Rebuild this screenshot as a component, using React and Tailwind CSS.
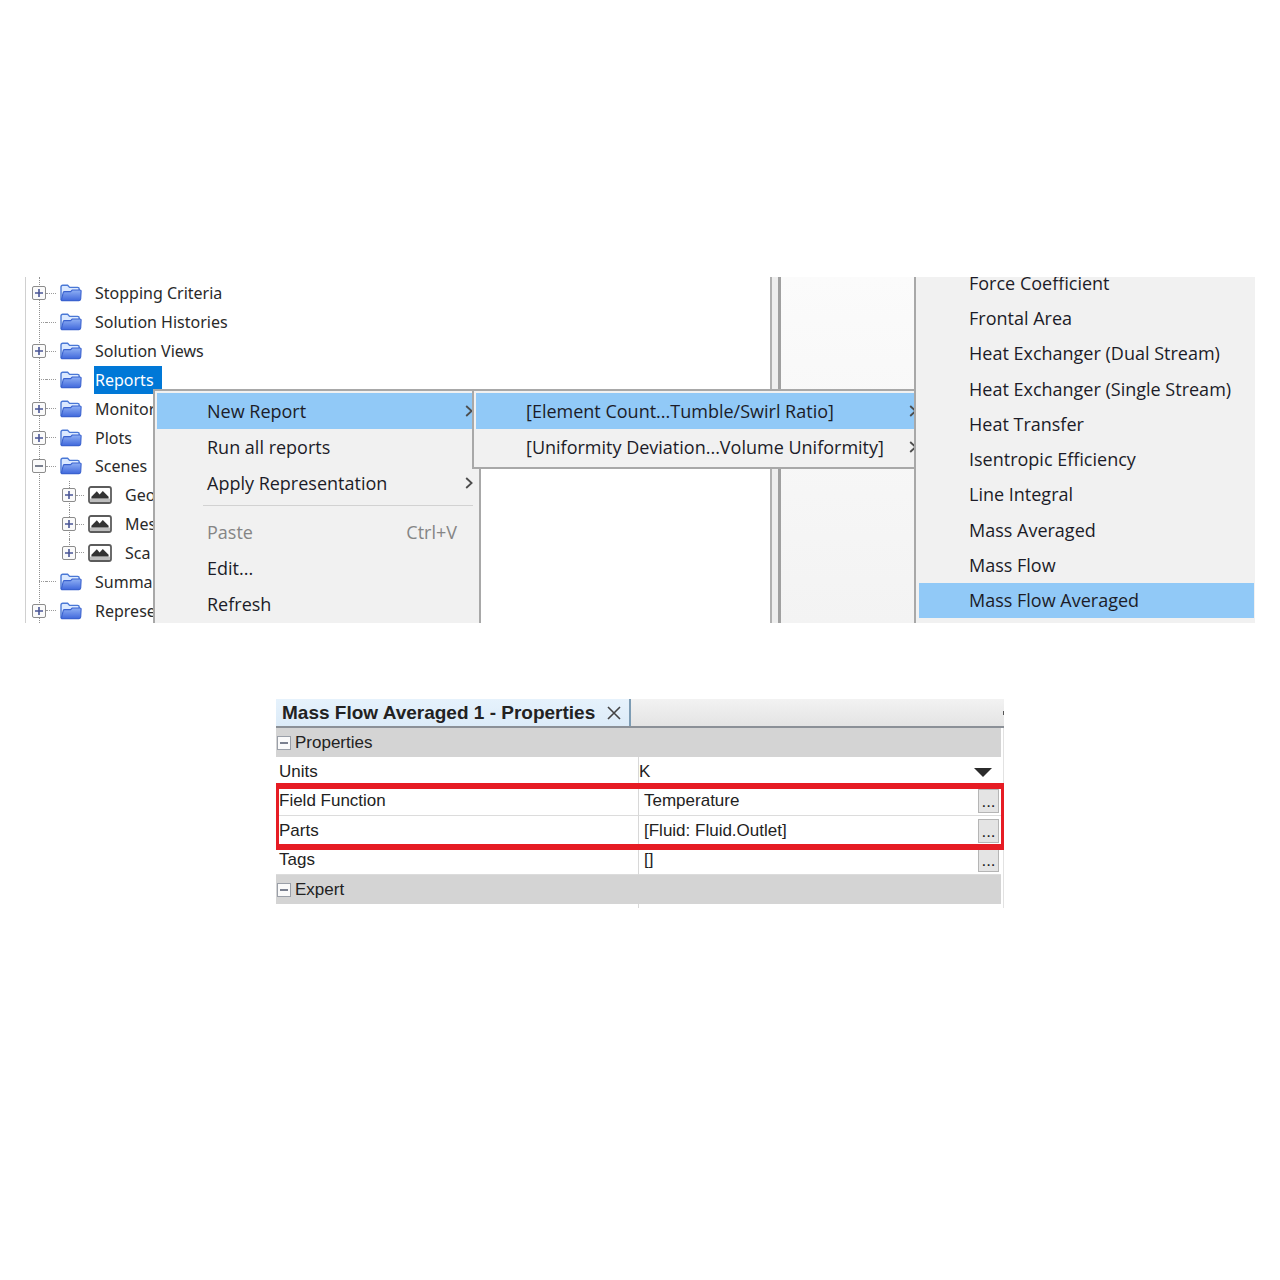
import clsx from "clsx";

const TREE = [
  { label: "Stopping Criteria", state: "closed" },
  { label: "Solution Histories" },
  { label: "Solution Views", state: "closed" },
  { label: "Reports", selected: true },
  { label: "Monitor", state: "closed" },
  { label: "Plots", state: "closed" },
  { label: "Scenes", state: "open" },
  { label: "Geo", state: "closed", child: true },
  { label: "Mes", state: "closed", child: true },
  { label: "Sca", state: "closed", child: true, last: true },
  { label: "Summar" },
  { label: "Represe", state: "closed" },
];

const REPORT_TYPES = [
  "Force Coefficient",
  "Frontal Area",
  "Heat Exchanger (Dual Stream)",
  "Heat Exchanger (Single Stream)",
  "Heat Transfer",
  "Isentropic Efficiency",
  "Line Integral",
  "Mass Averaged",
  "Mass Flow",
  "Mass Flow Averaged",
];

function FolderIcon() {
  return (
    <svg width="22" height="18" viewBox="0 0 22 18" className="shrink-0">
      <defs>
        <linearGradient id="folder" x1="0" y1="0" x2="0" y2="1">
          <stop offset="0" stopColor="#8fb0f4" />
          <stop offset="1" stopColor="#4169dc" />
        </linearGradient>
      </defs>
      <path
        d="M1 15.5V3Q1 1.2 2.8 1.2H7.6L9.6 3.4H17.6Q19.2 3.4 19.2 5V15.5Z"
        fill="#dbe9ff"
        stroke="#4a78d6"
        strokeWidth="1.4"
      />
      <path
        d="M1.4 16 3.2 8.6Q3.5 7.6 4.6 7.6H10.6L12.2 6H20Q21.2 6 21.1 7.2L20.7 15Q20.6 16.6 19 16.6H2.2Q1.2 16.6 1.4 16Z"
        fill="url(#folder)"
        stroke="#3a62cf"
        strokeWidth="1.1"
      />
    </svg>
  );
}

function SceneIcon() {
  return (
    <svg width="24" height="18" viewBox="0 0 24 18" className="shrink-0">
      <rect x="1" y="1" width="22" height="16" rx="2" fill="#fff" stroke="#5c5c5c" strokeWidth="1.8" />
      <path d="M2 12.6H22V16H2Z" fill="#bdbdbd" />
      <path d="M3.4 12.6V10.8L8.8 5.2 11.6 8.6 14.8 5 20.6 10.8V12.6Z" fill="#333" />
    </svg>
  );
}

function ToggleBox({ open, label, square }) {
  return (
    <button
      type="button"
      aria-label={label}
      aria-expanded={open}
      className={clsx(
        "relative z-10 flex size-[14px] shrink-0 items-center justify-center border bg-[#fafafa]",
        square ? "border-[#9a9fa8]" : "rounded-xs border-[#8c8c8c]",
      )}
    >
      <svg width="10" height="10" viewBox="0 0 10 10">
        <path
          d={open ? "M1 5H9" : "M1 5H9M5 1V9"}
          stroke={open ? "#5b6275" : "#4a5696"}
          strokeWidth="1.6"
        />
      </svg>
    </button>
  );
}

function TreeRow({ label, state, selected, child, last }) {
  return (
    <li className={clsx("relative flex items-center", child ? "pl-9" : "pl-[6px]")}>
      {child && (
        <span
          className={clsx(
            "absolute top-0 left-[43px] border-l border-dotted border-[#8f8f8f]",
            last ? "h-1/2" : "h-full",
          )}
        />
      )}
      {state ? (
        <ToggleBox open={state === "open"} label={`Toggle ${label}`} />
      ) : (
        <span className="ml-[7px] w-[7px] border-t border-dotted border-[#9a9a9a]" />
      )}
      <span
        className={clsx(
          "mr-1 border-t border-dotted border-[#9a9a9a]",
          child ? "w-2" : "w-[10px]",
        )}
      />
      {child ? <SceneIcon /> : <FolderIcon />}
      <span
        className={clsx(
          "ml-3 flex h-full items-center pl-px whitespace-nowrap",
          selected && "bg-[#0078d7] pr-2 text-white",
        )}
      >
        {label}
      </span>
    </li>
  );
}

function Chevron() {
  return (
    <svg width="8" height="12" viewBox="0 0 8 12" className="shrink-0">
      <path d="M1.2 1 6.6 6 1.2 11" fill="none" stroke="#4d4d4d" strokeWidth="1.8" />
    </svg>
  );
}

function MenuItem({ label, shortcut, submenu, active, disabled }) {
  return (
    <li>
      <button
        type="button"
        disabled={disabled}
        className={clsx(
          "flex h-full w-full items-center pr-1 pl-[50px] text-left whitespace-nowrap",
          active && "bg-[#91c9f7]",
          disabled && "text-[#858585]",
        )}
      >
        <span className="flex-1">{label}</span>
        {shortcut && <span className="pr-4">{shortcut}</span>}
        {submenu && <Chevron />}
      </button>
    </li>
  );
}

function ReportMenus() {
  return (
    <div className="absolute inset-0 font-['Open_Sans','Noto_Sans',sans-serif] text-[18px] leading-6 text-[#1c1c28]">
      <div className="absolute top-28 left-32 h-60 w-[328px] border-2 border-[#a8a8a8] bg-[#f1f1f1] p-[2px]">
        <ul className="grid auto-rows-[36px]">
          <MenuItem label="New Report" submenu active />
          <MenuItem label="Run all reports" />
          <MenuItem label="Apply Representation" submenu />
        </ul>
        <hr className="mt-1 mr-1 mb-2 ml-[46px] border-[#d2d2d2]" />
        <ul className="grid auto-rows-[36px]">
          <MenuItem label="Paste" shortcut="Ctrl+V" disabled />
          <MenuItem label="Edit..." />
          <MenuItem label="Refresh" />
        </ul>
      </div>
      <div className="absolute top-28 left-[447px] w-[453px] border-2 border-[#a8a8a8] bg-[#f1f1f1] p-[2px]">
        <ul className="grid auto-rows-[36px]">
          <MenuItem label="[Element Count...Tumble/Swirl Ratio]" submenu active />
          <MenuItem label="[Uniformity Deviation...Volume Uniformity]" submenu />
        </ul>
      </div>
      <div className="absolute top-0 right-0 bottom-0 left-[889px] border-l-2 border-[#a8a8a8] bg-[#f1f1f1]">
        <ul className="absolute right-px bottom-[5px] left-[3px] grid h-[353px] auto-rows-fr">
          {REPORT_TYPES.map((type) => (
            <MenuItem key={type} label={type} active={type === "Mass Flow Averaged"} />
          ))}
        </ul>
      </div>
    </div>
  );
}

function SimulationWindow() {
  return (
    <section className="relative grid h-[346px] grid-cols-[745fr_11px_474fr] overflow-hidden">
      <ul className="relative grid h-[348px] auto-rows-fr border-l border-[#d0d0d0] pt-[2px] font-['Noto_Sans','Open_Sans',sans-serif] text-[16px] leading-6 text-[#2a2a2a]">
        <li aria-hidden="true" className="absolute inset-y-0 left-[13px] border-l border-dotted border-[#8f8f8f]" />
        {TREE.map((node) => (
          <TreeRow key={node.label} {...node} />
        ))}
      </ul>
      <div className="border-r-3 border-l-2 border-r-[#a0a0a0] border-l-[#b0b0b0] bg-[#eeeeee]" />
      <div className="bg-linear-to-b from-[#fbfbfb] to-[#f3f3f3]" />
      <ReportMenus />
    </section>
  );
}

function SectionRow({ title }) {
  return (
    <tr className="h-[29px] bg-[#d4d4d4]">
      <th colSpan="2" className="text-left font-normal">
        <span className="flex items-center gap-1 pl-px">
          <ToggleBox open square label={`Toggle ${title}`} />
          {title}
        </span>
      </th>
    </tr>
  );
}

function PropertyRow({ name, value }) {
  return (
    <tr className="h-[29px] border-b border-[#dcdcdc]">
      <th className="border-r border-[#d8d8d8] pl-[3px] text-left font-normal">{name}</th>
      <td className="pl-[5px]">
        <div className="flex items-center justify-between pr-[2px]">
          {value}
          <button
            type="button"
            aria-label={`Edit ${name}`}
            className="flex h-6 w-[21px] items-end justify-center border border-[#b5b5b5] bg-[#e4e4e4] leading-5"
          >
            ...
          </button>
        </div>
      </td>
    </tr>
  );
}

function PropertiesPanel() {
  return (
    <section className="relative mx-auto w-[728px] max-w-full font-['Liberation_Sans',Arial,sans-serif] text-[17px] leading-6 text-[#222]">
      <div className="flex h-[29px] items-stretch justify-between border-b-2 border-[#8b9097] bg-linear-to-b from-[#f2f2f2] to-[#e4e4e4]">
        <div className="flex items-center gap-3 border-r-2 border-[#7d9cb4] bg-linear-to-b from-[#e6f2fc] to-[#dcebf8] pr-2 pl-[6px]">
          <h2 className="text-[19px] font-bold">Mass Flow Averaged 1 - Properties</h2>
          <button type="button" aria-label="Close">
            <svg width="14" height="14" viewBox="0 0 14 14">
              <path d="M1 1 13 13M13 1 1 13" stroke="#444" strokeWidth="1.6" />
            </svg>
          </button>
        </div>
        <span className="h-1 w-px self-center bg-[#555]" />
      </div>
      <div className="border-r border-[#e2e2e2] pr-[2px]">
        <table className="h-44 w-full table-fixed border-collapse">
          <colgroup>
            <col className="w-1/2" />
            <col className="w-1/2" />
          </colgroup>
          <tbody>
            <SectionRow title="Properties" />
            <tr className="h-[29px]">
              <th className="border-r border-[#d8d8d8] pl-[3px] text-left font-normal">
                <label htmlFor="units">Units</label>
              </th>
              <td>
                <div className="relative">
                  <select id="units" className="block w-full appearance-none bg-transparent">
                    <option>K</option>
                  </select>
                  <svg
                    width="18"
                    height="9"
                    viewBox="0 0 18 9"
                    className="pointer-events-none absolute top-2 right-[9px]"
                  >
                    <path d="M0 0H18L9 9Z" fill="#2b2b2b" />
                  </svg>
                </div>
              </td>
            </tr>
            <PropertyRow name="Field Function" value="Temperature" />
            <PropertyRow name="Parts" value="[Fluid: Fluid.Outlet]" />
            <PropertyRow name="Tags" value="[]" />
            <SectionRow title="Expert" />
          </tbody>
        </table>
        <div className="h-1 w-1/2 border-r border-[#d8d8d8]" />
      </div>
      <div className="pointer-events-none absolute inset-x-0 top-[84px] h-[67px] border-x-3 border-y-6 border-[#e61c24]" />
    </section>
  );
}

export default function App() {
  return (
    <main className="min-h-screen bg-white px-[25px] pt-[277px] pb-10">
      <SimulationWindow />
      <div className="mt-[76px]">
        <PropertiesPanel />
      </div>
    </main>
  );
}
